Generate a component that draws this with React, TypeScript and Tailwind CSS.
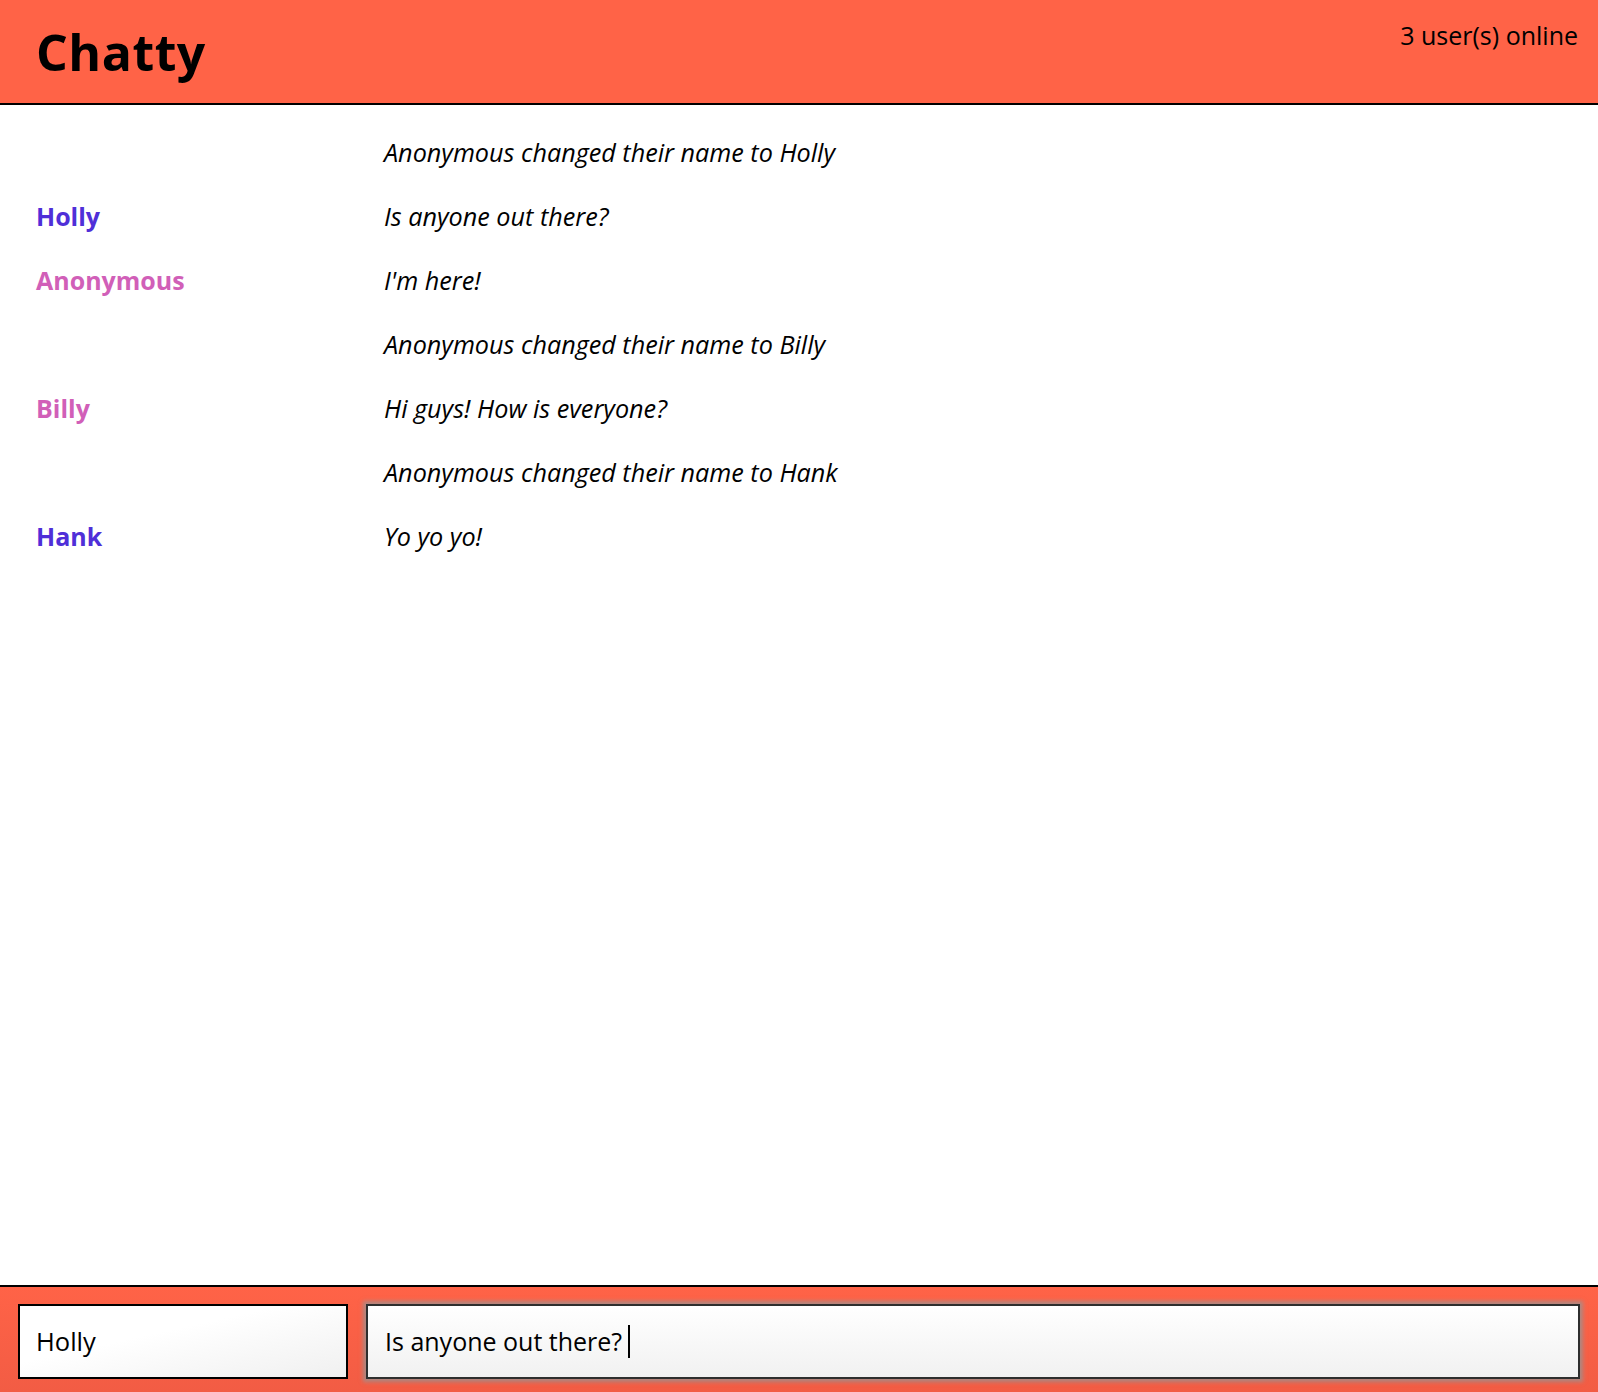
import React from "react";

interface Message {
  id: number;
  kind: "message" | "notification";
  username?: string;
  content: string;
  color?: string;
}

const messages: Message[] = [
  { id: 1, kind: "notification", content: "Anonymous changed their name to Holly" },
  { id: 2, kind: "message", username: "Holly", content: "Is anyone out there?", color: "text-[#4f2fd8]" },
  { id: 3, kind: "message", username: "Anonymous", content: "I'm here!", color: "text-[#d15fb8]" },
  { id: 4, kind: "notification", content: "Anonymous changed their name to Billy" },
  { id: 5, kind: "message", username: "Billy", content: "Hi guys! How is everyone?", color: "text-[#d15fb8]" },
  { id: 6, kind: "notification", content: "Anonymous changed their name to Hank" },
  { id: 7, kind: "message", username: "Hank", content: "Yo yo yo!", color: "text-[#4f2fd8]" },
];

function NavBar() {
  return (
    <nav className="flex h-[105px] shrink-0 items-start justify-between border-b-2 border-black bg-[#ff6347] pl-[36px] pr-[20px]">
      <a className="mt-[20px] text-[50px] font-bold leading-[64px] tracking-[0.5px] text-black">Chatty</a>
      <span className="mt-[17px] text-[25px] leading-[36px] text-black">3 user(s) online</span>
    </nav>
  );
}

function MessageRow({ message }: { message: Message }) {
  return (
    <div className="flex h-[64px] items-center">
      <span className={`w-[348px] shrink-0 text-[25px] font-bold ${message.color ?? ""}`}>
        {message.username ?? ""}
      </span>
      <span className="text-[25.2px] italic text-black">{message.content}</span>
    </div>
  );
}

function ChatBar() {
  return (
    <footer className="flex h-[107px] shrink-0 gap-[18px] border-t-2 border-black bg-gradient-to-b from-[#ff6347] to-[#f25c44] px-[18px] pt-[17px]">
      <div className="flex h-[75px] w-[330px] shrink-0 items-center border-2 border-black bg-gradient-to-br from-white from-40% to-[#f0f0f0] pl-[16px] text-[25.5px] text-black">
        Holly
      </div>
      <div className="flex h-[75px] flex-1 items-center border-2 border-[#2e2e2e] bg-gradient-to-b from-white to-[#f1f1f1] pl-[17px] text-[25px] text-black shadow-[0_0_4px_3px_rgba(150,150,150,0.75)]">
        <span>Is anyone out there?</span>
        <span className="ml-[6px] h-[33px] w-[2px] bg-black" />
      </div>
    </footer>
  );
}

export default function App() {
  return (
    <div className="flex h-[1392px] flex-col bg-white font-['Open_Sans',sans-serif]">
      <NavBar />
      <main className="flex-1 pt-[16px] pl-[36px]">
        {messages.map((m) => (
          <MessageRow key={m.id} message={m} />
        ))}
      </main>
      <ChatBar />
    </div>
  );
}
